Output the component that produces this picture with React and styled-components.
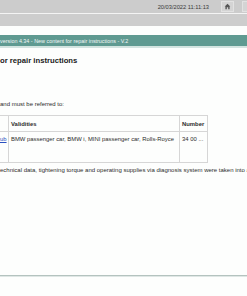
import React from "react";
import styled, { createGlobalStyle } from "styled-components";

const Global = createGlobalStyle`
  html, body { margin: 0; padding: 0; background: #fdfefd; }
  body { font-family: "Liberation Sans", Arial, sans-serif; }
  #root { width: 247px; height: 296px; overflow: hidden; }
`;

const Page = styled.div`
  width: 247px;
  height: 296px;
  display: flex;
  flex-direction: column;
  background: #fdfefd;
  overflow: hidden;
`;

const TopBar = styled.div`
  height: 13px;
  background: #cccccc;
  display: flex;
  align-items: center;
  justify-content: flex-end;
  gap: 8px;
  border-bottom: 1px solid #f4f4f4;
  flex-shrink: 0;
`;

const DateText = styled.span`
  font-size: 5.7px;
  color: #3a3a3a;
  margin-right: 4px;
`;

const IconButton = styled.div`
  width: 11px;
  height: 9px;
  border: 1px solid #e2e2e2;
  background: #d4d4d4;
  display: flex;
  align-items: center;
  justify-content: center;
  margin-right: ${(p) => (p.$cut ? "-8px" : "0")};
`;

const NavBar = styled.div`
  height: 12px;
  background: #cdcdcd;
  flex-shrink: 0;
`;

const Content = styled.div`
  display: flex;
  flex-direction: column;
  padding-top: 9px;
  flex: 1;
`;

const TitleBar = styled.div`
  height: 11px;
  background: #5f9a91;
  border-bottom: 2px solid #d3e4e0;
  color: #f2f7f6;
  font-size: 5.4px;
  display: flex;
  align-items: center;
  white-space: nowrap;
`;

const Heading = styled.h1`
  margin: 8px 0 0;
  font-size: 7.7px;
  line-height: 9px;
  font-weight: bold;
  color: #1b1b1b;
  white-space: nowrap;
`;

const Text = styled.p`
  margin: ${(p) => p.$m || "0"};
  font-size: 6px;
  line-height: 7px;
  color: #2c2c2c;
  white-space: nowrap;
`;

const Table = styled.table`
  border-collapse: collapse;
  margin-top: 7px;
  width: 208px;
  font-size: 5.9px;
  color: #2c2c2c;
`;

const Th = styled.th`
  text-align: left;
  font-weight: bold;
  height: 15px;
  padding: 0 2px;
  border: 1px solid #d6d6d6;
  vertical-align: middle;
  width: ${(p) => p.$w || "auto"};
  ${(p) => p.$first && "border-left: none; padding: 0;"}
`;

const Td = styled.td`
  height: 26px;
  padding: 4px 2px 0;
  border: 1px solid #d6d6d6;
  vertical-align: top;
  white-space: nowrap;
  ${(p) => p.$first && "border-left: none; padding: 4px 0 0;"}
`;

const Link = styled.a`
  color: #2a4fc0;
  text-decoration: underline;
`;

const Rule = styled.div`
  margin-top: auto;
  margin-bottom: 19px;
  height: 1px;
  background: #b4c3bf;
  border-bottom: 1px solid #dfe7e5;
`;

const HomeIcon = () => (
  <svg width="7" height="7" viewBox="0 0 10 10">
    <path d="M5 1 L9 5 L8 5 L8 9 L6 9 L6 6 L4 6 L4 9 L2 9 L2 5 L1 5 Z" fill="#555" />
  </svg>
);

export default function App() {
  return (
    <>
      <Global />
      <Page>
        <TopBar>
          <DateText>20/03/2022 11:11:13</DateText>
          <IconButton>
            <HomeIcon />
          </IconButton>
          <IconButton $cut />
        </TopBar>
        <NavBar />
        <Content>
          <TitleBar>version 4.34 - New content for repair instructions - V.2</TitleBar>
          <Heading>or repair instructions</Heading>
          <Text $m="36px 0 0">and must be referred to:</Text>
          <Table>
            <thead>
              <tr>
                <Th $first $w="8px"></Th>
                <Th $w="166px">Validities</Th>
                <Th>Number</Th>
              </tr>
            </thead>
            <tbody>
              <tr>
                <Td $first>
                  <Link>ub</Link>
                </Td>
                <Td>BMW passenger car, BMW i, MINI passenger car, Rolls-Royce</Td>
                <Td>34 00 ...</Td>
              </tr>
            </tbody>
          </Table>
          <Text $m="4px 0 0">
            echnical data, tightening torque and operating supplies via diagnosis system were taken into a
          </Text>
          <Rule />
        </Content>
      </Page>
    </>
  );
}
